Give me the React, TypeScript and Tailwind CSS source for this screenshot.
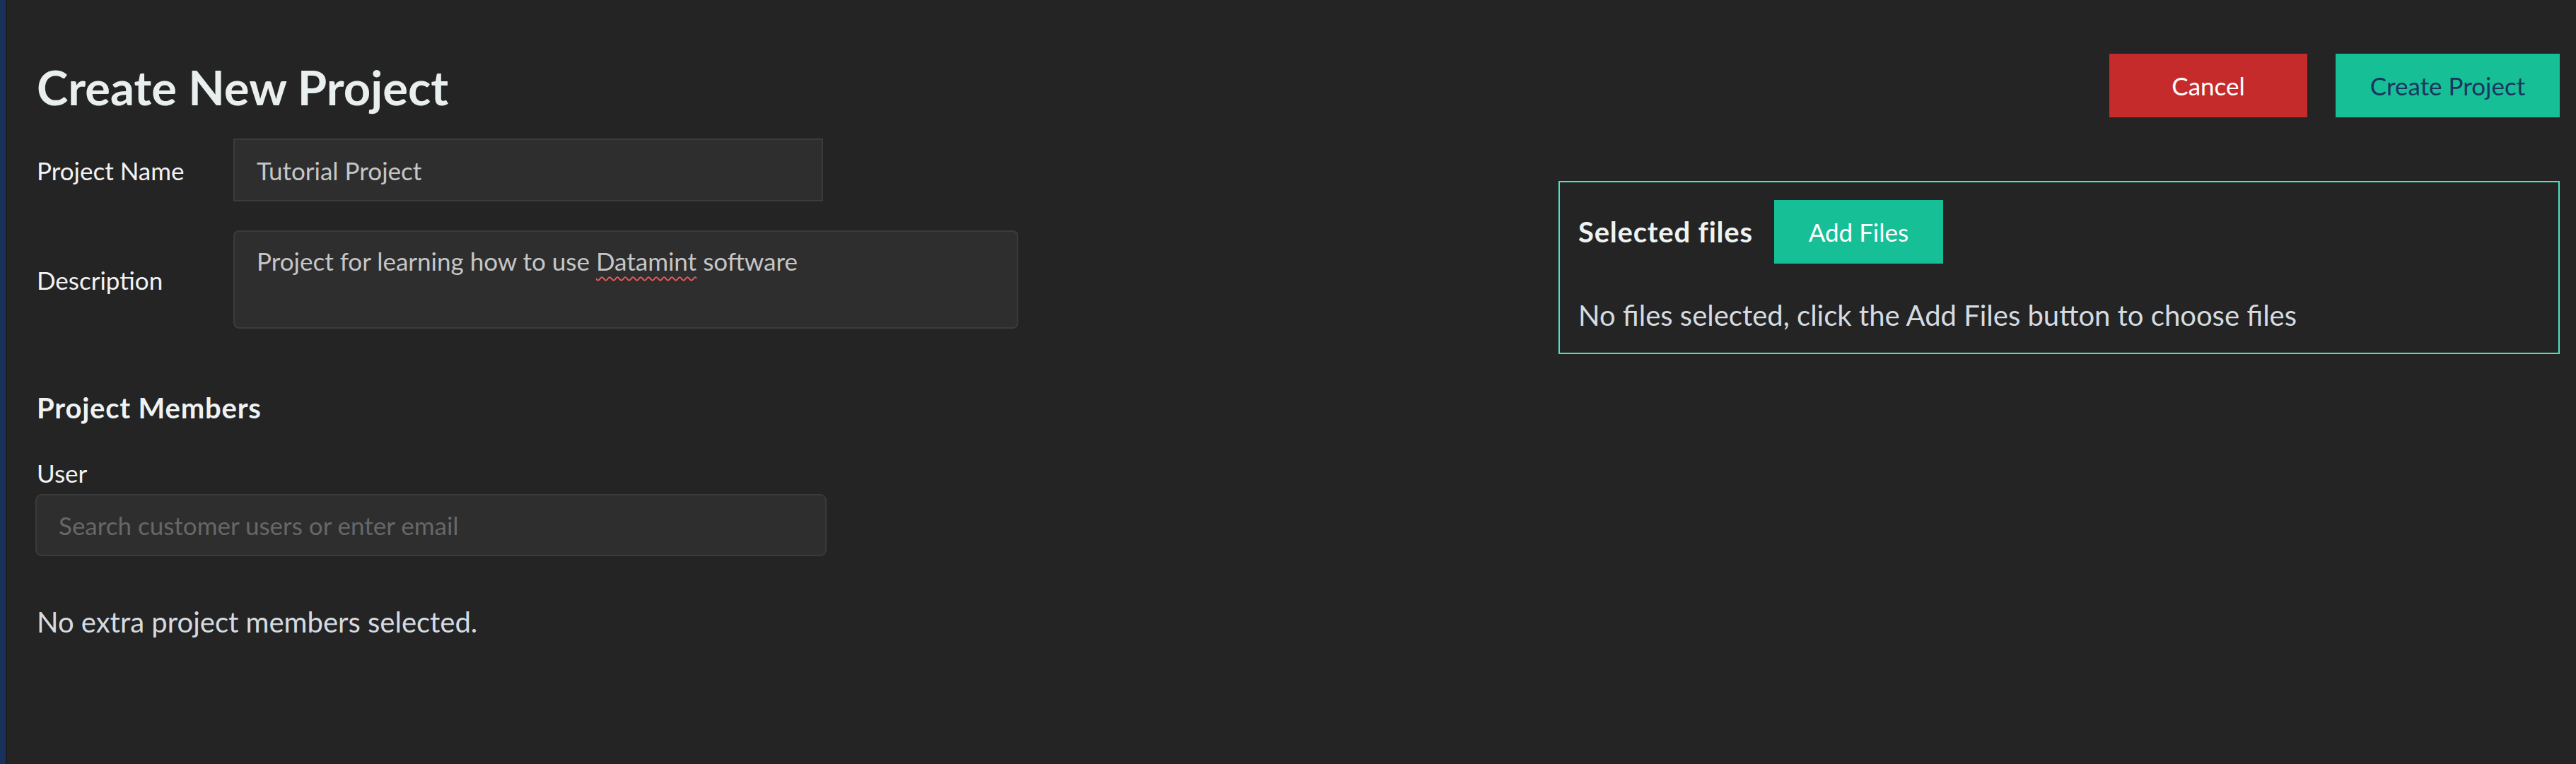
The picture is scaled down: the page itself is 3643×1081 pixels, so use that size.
import React from "react";

function Field({ label, children }: { label: string; children: React.ReactNode }) {
  return (
    <div className="flex items-center">
      <label className="w-[278px] shrink-0 text-[35px] leading-[42px] text-[#f2f2f2]">{label}</label>
      {children}
    </div>
  );
}

export default function App() {
  return (
    <div className="flex h-[1081px] w-full overflow-hidden bg-[#242424] font-['Lato',sans-serif]">
      {/* side accent strip */}
      <div className="w-[10px] shrink-0 border-r-2 border-[#1c1c1c] bg-[#19305a]" />

      <main className="flex flex-1 flex-col pl-[42px] pr-[23px]">
        {/* header */}
        <header className="flex items-start justify-between pt-[76px]">
          <h1 className="mt-[6px] text-[67px] font-bold leading-[82px] text-[#e9efee]">Create New Project</h1>
          <div className="flex gap-[40px]">
            <button className="flex h-[90px] w-[280px] items-center justify-center bg-[#c62b2b] text-[35px] leading-[42px] text-white">
              Cancel
            </button>
            <button className="flex h-[90px] w-[317px] items-center justify-center bg-[#17bf97] text-[35px] leading-[42px] text-[#1b3560]">
              Create Project
            </button>
          </div>
        </header>

        <div className="mt-[30px] flex items-start justify-between">
          {/* project form */}
          <section className="flex flex-col">
            <Field label="Project Name">
              <input
                readOnly
                defaultValue="Tutorial Project"
                className="h-[89px] w-[834px] border-2 border-[#3c3c3c] bg-[#2e2e2e] pl-[31px] text-[35px] text-[#c6c6c6] outline-none"
              />
            </Field>

            <div className="mt-[41px]">
              <Field label="Description">
                <div className="h-[139px] w-[1110px] rounded-[8px] border-2 border-[#3c3c3c] bg-[#2e2e2e] px-[31px] pt-[20px] text-[35px] leading-[42px] text-[#c6c6c6]">
                  Project for learning how to use{" "}
                  <span className="underline decoration-[#f05a5a] decoration-wavy decoration-2 underline-offset-[8px]">
                    Datamint
                  </span>{" "}
                  software
                </div>
              </Field>
            </div>

            <h2 className="mt-[88px] text-[40px] font-bold leading-[48px] tracking-[0.8px] text-[#eef3f2]">
              Project Members
            </h2>

            <label className="mt-[47px] text-[35px] leading-[42px] text-[#f2f2f2]">User</label>
            <input
              placeholder="Search customer users or enter email"
              className="-ml-[2px] mt-[9px] h-[88px] w-[1119px] rounded-[9px] border-2 border-[#3a3a3a] bg-[#2e2e2e] pl-[31px] text-[35px] text-[#c6c6c6] outline-none placeholder:text-[#676767]"
            />

            <p className="mt-[69px] text-[40px] leading-[48px] text-[#d5dbe0]">No extra project members selected.</p>
          </section>

          {/* file picker */}
          <section className="mt-[60px] h-[245px] w-[1416px] border-2 border-[#4fe2c2] pl-[26px] pt-[25px]">
            <div className="flex items-center gap-[30px]">
              <h2 className="text-[40px] font-bold leading-[48px] tracking-[0.8px] text-[#eef3f2]">Selected files</h2>
              <button className="flex h-[90px] w-[239px] items-center justify-center bg-[#17bf97] text-[35px] leading-[42px] text-white">
                Add Files
              </button>
            </div>
            <p className="mt-[49px] text-[40px] leading-[48px] text-[#d5dbe0]">
              No files selected, click the Add Files button to choose files
            </p>
          </section>
        </div>
      </main>
    </div>
  );
}
